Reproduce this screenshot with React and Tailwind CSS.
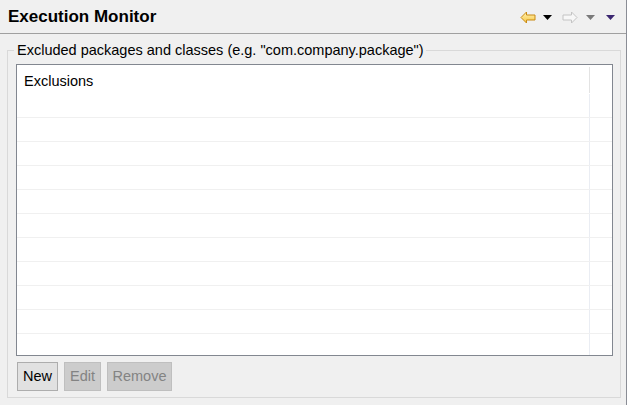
import React from "react";

const FONT = { fontFamily: '"Liberation Sans", Arial, sans-serif' };

function BackArrow() {
  return (
    <svg width="16" height="13" viewBox="0 0 16 13" className="block">
      <defs>
        <linearGradient id="ba" x1="0" y1="0" x2="0" y2="1">
          <stop offset="0" stopColor="#fff3b8" />
          <stop offset="1" stopColor="#f7c640" />
        </linearGradient>
      </defs>
      <polygon
        points="1,6.5 6.5,1 6.5,4 15,4 15,9 6.5,9 6.5,12"
        fill="url(#ba)"
        stroke="#c98a12"
        strokeWidth="1"
        strokeLinejoin="round"
      />
    </svg>
  );
}

function ForwardArrow() {
  return (
    <svg width="16" height="13" viewBox="0 0 16 13" className="block">
      <polygon
        points="15,6.5 9.5,1 9.5,4 1,4 1,9 9.5,9 9.5,12"
        fill="#f7f7f7"
        stroke="#c4c4c4"
        strokeWidth="1"
        strokeLinejoin="round"
      />
    </svg>
  );
}

function Tri({ color }) {
  return (
    <svg width="9" height="5" viewBox="0 0 9 5" className="block">
      <polygon points="0,0 9,0 4.5,5" fill={color} />
    </svg>
  );
}

function Row() {
  return (
    <div className="flex h-[24px] shrink-0 border-b border-[#f0f0f0]">
      <div className="w-[572px] shrink-0" />
      <div className="w-px shrink-0 bg-[#eaedf3]" />
      <div className="flex-1" />
    </div>
  );
}

export default function App() {
  const rows = Array.from({ length: 11 });
  return (
    <div
      className="w-[627px] h-[405px] overflow-hidden bg-[#f0f0f0] border-r border-[#8a8d95] text-black"
      style={FONT}
    >
      <div className="h-[34px] flex items-center justify-between border-b border-[#a0a0a0] pl-[8px] pr-[11px]">
        <div className="text-[17px] font-bold tracking-[0px]">Execution Monitor</div>
        <div className="flex items-center pt-[1px]">
          <BackArrow />
          <div className="ml-[7px]">
            <Tri color="#000000" />
          </div>
          <div className="ml-[10px]">
            <ForwardArrow />
          </div>
          <div className="ml-[8px]">
            <Tri color="#7a7a7a" />
          </div>
          <div className="ml-[11px]">
            <Tri color="#3b2670" />
          </div>
        </div>
      </div>

      <fieldset className="ml-[7px] mt-[6px] w-[614px] border border-[#d9d9d9] pl-[8px] pr-[7px] pt-[4px] pb-[6px]">
        <legend className="-ml-[2px] pl-[3px] pr-[2px] text-[14.5px] leading-[20px]">
          Excluded packages and classes (e.g. "com.company.package")
        </legend>
        <div className="w-[597px] h-[292px] border border-[#828790] bg-white flex flex-col overflow-hidden">
          <div className="h-[29px] shrink-0 flex">
            <div className="w-[572px] shrink-0 pl-[7px] pt-[6px] text-[14.5px] leading-[20px]">
              Exclusions
            </div>
            <div className="w-px shrink-0 mt-[2px] mb-[1px] bg-[#e3e3e3]" />
            <div className="flex-1" />
          </div>
          {rows.map((_, i) => (
            <Row key={i} />
          ))}
        </div>
        <div className="flex gap-[6px] mt-[6px] pl-[1px] text-[14.5px]">
          <button className="w-[41px] h-[29px] border border-[#adadad] bg-[#e1e1e1] text-black leading-none">
            New
          </button>
          <button className="w-[37px] h-[29px] border border-[#bfbfbf] bg-[#cccccc] text-[#838383] leading-none">
            Edit
          </button>
          <button className="w-[65px] h-[29px] border border-[#bfbfbf] bg-[#cccccc] text-[#838383] leading-none">
            Remove
          </button>
        </div>
      </fieldset>
    </div>
  );
}
